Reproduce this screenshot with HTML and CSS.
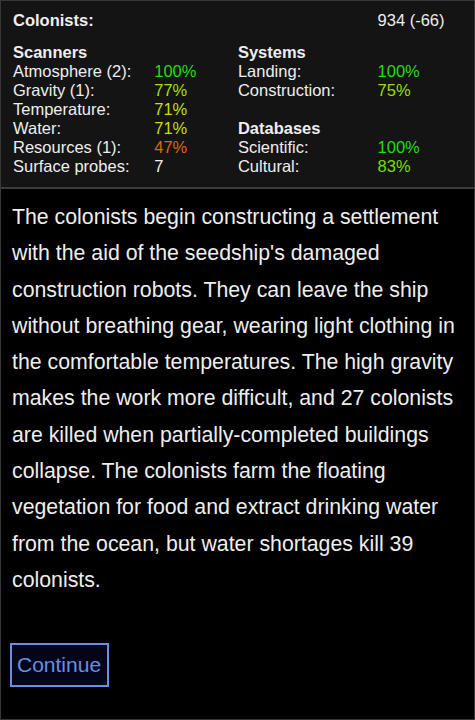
FILE: index.html
```html
<!DOCTYPE html>
<html lang="en">
<head>
    <meta charset="UTF-8" />
    <meta name="viewport" content="width=device-width, initial-scale=1.0" />
    <title>Seedship</title>
    <link rel="stylesheet" href="styles.css">
</head>
<body>
    <div class="screen">
        <div class="status">
            <table class="stats">
                <tr class="colonists">
                    <td colspan="3">Colonists:</td>
                    <td>934 (-66)</td>
                </tr>
                <tr class="spacer"><td colspan="4"></td></tr>
                <tr>
                    <th colspan="2">Scanners</th>
                    <th colspan="2">Systems</th>
                </tr>
                <tr>
                    <td>Atmosphere (2):</td><td class="v100">100%</td>
                    <td>Landing:</td><td class="v100">100%</td>
                </tr>
                <tr>
                    <td>Gravity (1):</td><td class="v77">77%</td>
                    <td>Construction:</td><td class="v75">75%</td>
                </tr>
                <tr>
                    <td>Temperature:</td><td class="v71">71%</td>
                    <td></td><td></td>
                </tr>
                <tr>
                    <td>Water:</td><td class="v71">71%</td>
                    <th colspan="2">Databases</th>
                </tr>
                <tr>
                    <td>Resources (1):</td><td class="v47">47%</td>
                    <td>Scientific:</td><td class="v100">100%</td>
                </tr>
                <tr>
                    <td>Surface probes:</td><td>7</td>
                    <td>Cultural:</td><td class="v83">83%</td>
                </tr>
            </table>
        </div>

        <p class="story">The colonists begin constructing a settlement with the aid of the seedship's damaged construction robots. They can leave the ship without breathing gear, wearing light clothing in the comfortable temperatures. The high gravity makes the work more difficult, and 27 colonists are killed when partially-completed buildings collapse. The colonists farm the floating vegetation for food and extract drinking water from the ocean, but water shortages kill 39 colonists.</p>

        <button class="continue">Continue</button>
    </div>
</body>
</html>
```

FILE: styles.css
```css
body {
    margin: 0;
    background: #000;
    font-family: "Liberation Sans", Arial, sans-serif;
    color: #eee;
}
.screen {
    box-sizing: border-box;
    height: 720px;
    border: 1px solid #383838;
}
.status {
    background-color: #141414;
    padding: 10px 12px 11px;
    border-bottom: 2px solid #3c3c3c;
}
.stats {
    border-collapse: collapse;
    font-size: 16.5px;
    line-height: 19px;
}
.stats td,
.stats th {
    padding: 0;
    text-align: left;
    vertical-align: top;
    white-space: nowrap;
}
.stats th {
    font-weight: bold;
}
.stats td:nth-child(1) { width: 142px; }
.stats td:nth-child(2) { width: 85px; }
.stats td:nth-child(3) { width: 141px; }
.colonists td:first-child {
    font-weight: bold;
}
.spacer td {
    height: 13px;
}
.v100 { color: #22dd11; }
.v83 { color: #77dd00; }
.v77 { color: #aadd00; }
.v75 { color: #99dd00; }
.v71 { color: #ccdd00; }
.v47 { color: #dd6611; }
.story {
    margin: 10px 0 0;
    padding: 0 12px 0 11px;
    font-size: 21.3px;
    line-height: 36.3px;
}
.continue {
    margin: 45px 0 0 9px;
    padding: 8px 6px 8px 5px;
    background-color: #05051a;
    border: 2px solid #6a8ee0;
    color: #6a8ee0;
    font-family: "Liberation Sans", Arial, sans-serif;
    font-size: 21px;
    line-height: 24px;
    cursor: pointer;
}
```
